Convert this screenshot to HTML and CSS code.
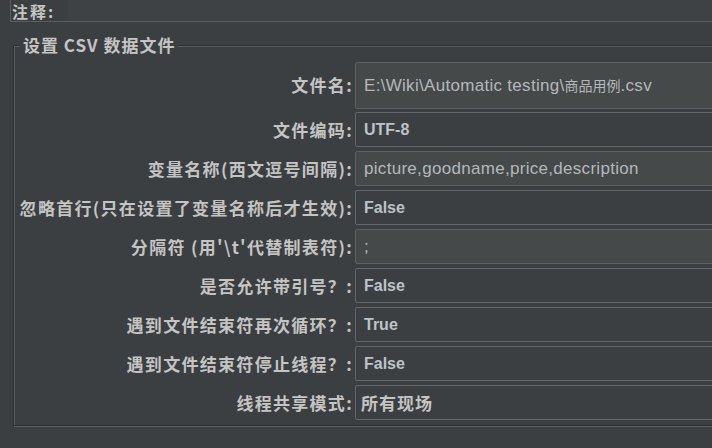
FILE: index.html
```html
<!DOCTYPE html>
<html lang="zh-CN">
<head>
<meta charset="utf-8">
<title>CSV 数据文件设置</title>
<link rel="stylesheet" href="styles.css">
</head>
<body>
<div class="page">
  <div class="comment">
    <span class="comment-label">注释:</span>
    <div class="comment-field"></div>
  </div>
  <fieldset class="group">
    <legend class="group-title">设置 CSV 数据文件</legend>
    <div class="form">
      <label class="lbl">文件名:</label>
      <div class="field text"><span class="val-plain">E:\Wiki\Automatic testing\<span class="cjk-small">商品用例</span>.csv</span></div>

      <label class="lbl">文件编码:</label>
      <div class="field combo"><span class="val-bold">UTF-8</span></div>

      <label class="lbl">变量名称(西文逗号间隔):</label>
      <div class="field text"><span class="val-plain">picture,goodname,price,description</span></div>

      <label class="lbl">忽略首行(只在设置了变量名称后才生效):</label>
      <div class="field combo"><span class="val-bold">False</span></div>

      <label class="lbl">分隔符 (用'\t'代替制表符):</label>
      <div class="field text"><span class="val-plain">;</span></div>

      <label class="lbl">是否允许带引号？:</label>
      <div class="field combo"><span class="val-bold">False</span></div>

      <label class="lbl">遇到文件结束符再次循环？:</label>
      <div class="field combo"><span class="val-bold">True</span></div>

      <label class="lbl">遇到文件结束符停止线程？:</label>
      <div class="field combo"><span class="val-bold">False</span></div>

      <label class="lbl">线程共享模式:</label>
      <div class="field combo"><span class="val-cjk">所有现场</span></div>
    </div>
  </fieldset>
</div>
</body>
</html>
```

FILE: styles.css
```css
html, body {
  margin: 0;
  padding: 0;
  background: #3c3f41;
}

.page {
  width: 760px;
  height: 448px;
  overflow: hidden;
  background: #3c3f41;
  color: #bbbbbb;
  font-family: "Noto Sans CJK SC", "Noto Sans", sans-serif;
}

.comment {
  display: flex;
  height: 21px;
  margin-left: 10px;
  border-left: 1px solid #5b5e60;
  border-bottom: 1px solid #5b5e60;
}

.comment-label {
  box-sizing: border-box;
  width: 57px;
  height: 21px;
  padding: 1px 0 0 1px;
  font-size: 16px;
  font-weight: 700;
  letter-spacing: 2px;
  line-height: 20px;
  color: #c4c4c4;
}

.comment-field {
  flex: 1;
  background: #3f4244;
}

.group {
  margin: 13px 0 0 13px;
  padding: 7px 0 5px 0;
  border: 1px solid #2d2f31;
  box-shadow: 1px 1px 0 #5b5e60, inset 1px 1px 0 #5b5e60;
  min-width: 0;
}

.group-title {
  margin-left: 6px;
  padding: 0 3px;
  background: #3c3f41;
  font-size: 17px;
  font-weight: 700;
  letter-spacing: 1px;
  line-height: 20px;
  color: #c4c4c4;
}

.form {
  display: grid;
  grid-template-columns: 338px 1fr;
  grid-template-rows: 46px;
  grid-auto-rows: 35px;
  column-gap: 3px;
  row-gap: 4px;
}

.lbl {
  align-self: center;
  justify-self: end;
  font-size: 17px;
  font-weight: 700;
  letter-spacing: 1.3px;
  line-height: 20px;
  white-space: nowrap;
  color: #c4c4c4;
  margin-right: -1px;
}

.field {
  display: flex;
  align-items: center;
  box-sizing: border-box;
  border: 1px solid #5e6163;
  border-radius: 2px;
  padding-left: 8px;
  white-space: nowrap;
  overflow: hidden;
}

.form > .field:first-of-type {
  margin-bottom: -1px;
}

.field.text {
  background: #45494a;
}

.field.combo {
  background: #3c3f41;
  border-color: #646769;
}

.val-plain {
  font-family: "Liberation Sans", Arial, sans-serif;
  font-size: 17px;
  letter-spacing: 0.3px;
  color: #b4b8bb;
}

.cjk-small {
  font-family: "Noto Sans CJK SC", sans-serif;
  font-size: 14px;
  letter-spacing: 0;
}

.val-bold {
  font-family: "Liberation Sans", Arial, sans-serif;
  font-size: 16px;
  font-weight: 700;
  color: #bcc3c9;
}

.val-cjk {
  font-family: "Noto Sans CJK SC", sans-serif;
  font-size: 17px;
  font-weight: 700;
  letter-spacing: 1px;
  color: #c4c4c4;
  margin-left: -3px;
}
```
